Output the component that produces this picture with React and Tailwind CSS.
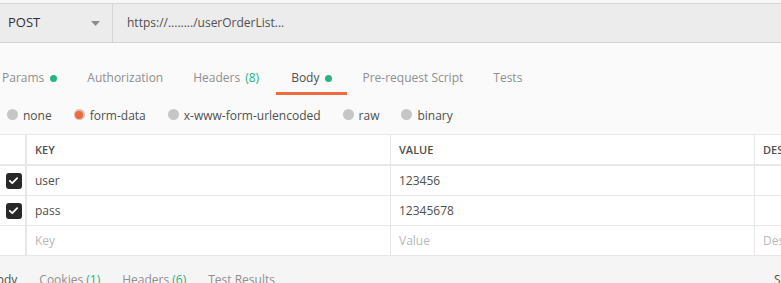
import React from "react";

const tabs = [
  { label: "Params", dot: true },
  { label: "Authorization" },
  { label: "Headers", count: "(8)" },
  { label: "Body", dot: true, active: true },
  { label: "Pre-request Script" },
  { label: "Tests" },
];

const bodyTypes = [
  { label: "none" },
  { label: "form-data", selected: true },
  { label: "x-www-form-urlencoded" },
  { label: "raw" },
  { label: "binary" },
];

const rows = [
  { key: "user", value: "123456", checked: true },
  { key: "pass", value: "12345678", checked: true },
];

const Check = () => (
  <div className="flex h-4 w-4 items-center justify-center rounded-[3px] bg-[#282828]">
    <svg width="11" height="11" viewBox="0 0 12 12" fill="none">
      <path d="M2 6.3l2.6 2.6L10 3.4" stroke="#fff" strokeWidth="2" strokeLinecap="round" strokeLinejoin="round" />
    </svg>
  </div>
);

const Row = ({ checked, k, v, d, placeholder }) => (
  <div className="flex h-[30px] border-b border-[#e8e8e8]">
    <div className="flex w-[27px] shrink-0 items-center justify-center border-r-2 border-[#e8e8e8] pl-[2px]">
      {checked && <Check />}
    </div>
    <div className={`flex w-[364px] shrink-0 items-center border-r border-[#e8e8e8] pl-[8px] ${placeholder ? "text-[#b8b8b8]" : "text-[#505050]"}`}>
      {k}
    </div>
    <div className={`flex w-[364px] shrink-0 items-center border-r border-[#e8e8e8] pl-[8px] ${placeholder ? "text-[#b8b8b8]" : "text-[#505050]"}`}>
      {v}
    </div>
    <div className="flex flex-1 items-center overflow-hidden whitespace-nowrap pl-[8px] text-[#b8b8b8]">{d}</div>
  </div>
);

export default function App() {
  return (
    <div className="h-[283px] w-[781px] overflow-hidden bg-[#fafafa] text-[12px] font-['Open_Sans',sans-serif]">
      <div className="h-[4px] border-b border-[#d6d6d6] bg-[#f7f7f7]" />

      {/* request bar */}
      <div className="flex h-[39px] border-b border-[#d2d2d2] bg-[#ececec]">
        <div className="flex w-[113px] shrink-0 items-center justify-between border-r border-[#d6d6d6] pl-[8px] pr-[12px] text-[#303030]">
          <span className="text-[13px]">POST</span>
          <svg width="9" height="5" viewBox="0 0 9 5">
            <path d="M0 0h9L4.5 5z" fill="#8c8c8c" />
          </svg>
        </div>
        <div className="flex items-center pl-[14px] text-[#505050]">https://......../userOrderList...</div>
      </div>

      {/* tabs */}
      <div className="-ml-[13px] mt-[18px] flex h-[34px] whitespace-nowrap">
        {tabs.map((t) => (
          <div
            key={t.label}
            className={`flex items-center gap-[6px] border-b-[3px] pl-[15px] pt-[3px] ${t.count ? "pr-[17px]" : "pr-[15px]"} ${
              t.active ? "border-[#ef6a3c] text-[#505050]" : "border-transparent text-[#8f8f8f]"
            }`}
          >
            <span>{t.label}</span>
            {t.count && <span className="-ml-[1px] text-[#26b47f]">{t.count}</span>}
            {t.dot && <span className="h-[7px] w-[7px] rounded-full bg-[#26b47f]" />}
          </div>
        ))}
      </div>

      {/* body types */}
      <div className="flex h-[39px] items-center gap-[22px] pl-[7px] text-[#505050]">
        {bodyTypes.map((b) => (
          <div key={b.label} className="flex items-center gap-[5px]">
            {b.selected ? (
              <span className="flex h-[11px] w-[11px] items-center justify-center rounded-full bg-[#d8c0b6]">
                <span className="h-[8px] w-[8px] rounded-full bg-[#ef6a3c]" />
              </span>
            ) : (
              <span className="h-[11px] w-[11px] rounded-full bg-[#c6c6c6]" />
            )}
            <span className="mt-[2px]">{b.label}</span>
          </div>
        ))}
      </div>

      {/* table */}
      <div className="border-t border-[#e8e8e8] bg-white">
        <div className="flex h-[31px] border-b-2 border-[#e8e8e8] text-[11px] font-semibold text-[#505050]">
          <div className="w-[27px] shrink-0 border-r-2 border-[#e8e8e8]" />
          <div className="flex w-[364px] shrink-0 items-center border-r border-[#e8e8e8] pl-[8px] pt-[2px]">KEY</div>
          <div className="flex w-[364px] shrink-0 items-center border-r border-[#e8e8e8] pl-[8px] pt-[2px]">VALUE</div>
          <div className="flex flex-1 items-center overflow-hidden whitespace-nowrap pl-[8px] pt-[2px]">DESCRIPTION</div>
        </div>
        {rows.map((r) => (
          <Row key={r.key} checked={r.checked} k={r.key} v={r.value} d="" />
        ))}
        <Row k="Key" v="Value" d="Description" placeholder />
      </div>

      {/* response tabs */}
      <div className="-ml-[11px] flex items-center justify-between whitespace-nowrap bg-[#f5f5f5] pt-[15px] text-[#8f8f8f]">
        <div className="flex gap-[22px]">
          <span className="text-[#505050]">Body</span>
          <span>
            Cookies <span className="text-[#26b47f]">(1)</span>
          </span>
          <span>
            Headers <span className="text-[#26b47f]">(6)</span>
          </span>
          <span>Test Results</span>
        </div>
        <span className="-mr-[28px] text-[#505050]">Status</span>
      </div>
    </div>
  );
}
